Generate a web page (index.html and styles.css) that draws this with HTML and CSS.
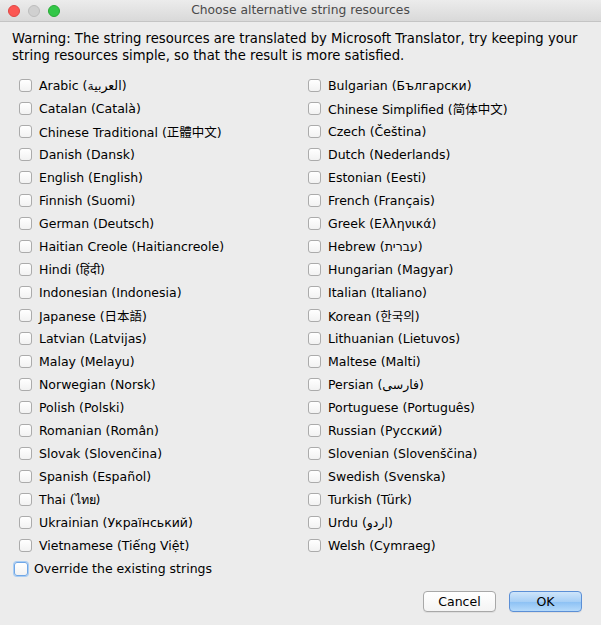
FILE: index.html
```html
<!DOCTYPE html>
<html>
<head>
<meta charset="utf-8">
<link rel="stylesheet" href="styles.css">
</head>
<body>
<div class="window">
  <div class="titlebar">
    <div class="lights">
      <span class="light red"></span>
      <span class="light gray"></span>
      <span class="light green"></span>
    </div>
    <div class="title">Choose alternative string resources</div>
  </div>
  <div class="content">
    <p class="warning">Warning: The string resources are translated by Microsoft Translator, try keeping your<br>string resources simple, so that the result is more satisfied.</p>
    <div class="grid">
      <label class="item"><span class="box"></span>Arabic (العربية)</label>
      <label class="item"><span class="box"></span>Bulgarian (Български)</label>
      <label class="item"><span class="box"></span>Catalan (Català)</label>
      <label class="item"><span class="box"></span>Chinese Simplified (简体中文)</label>
      <label class="item"><span class="box"></span>Chinese Traditional (正體中文)</label>
      <label class="item"><span class="box"></span>Czech (Čeština)</label>
      <label class="item"><span class="box"></span>Danish (Dansk)</label>
      <label class="item"><span class="box"></span>Dutch (Nederlands)</label>
      <label class="item"><span class="box"></span>English (English)</label>
      <label class="item"><span class="box"></span>Estonian (Eesti)</label>
      <label class="item"><span class="box"></span>Finnish (Suomi)</label>
      <label class="item"><span class="box"></span>French (Français)</label>
      <label class="item"><span class="box"></span>German (Deutsch)</label>
      <label class="item"><span class="box"></span>Greek (Ελληνικά)</label>
      <label class="item"><span class="box"></span>Haitian Creole (Haitiancreole)</label>
      <label class="item"><span class="box"></span>Hebrew (עברית)</label>
      <label class="item"><span class="box"></span>Hindi (हिंदी)</label>
      <label class="item"><span class="box"></span>Hungarian (Magyar)</label>
      <label class="item"><span class="box"></span>Indonesian (Indonesia)</label>
      <label class="item"><span class="box"></span>Italian (Italiano)</label>
      <label class="item"><span class="box"></span>Japanese (日本語)</label>
      <label class="item"><span class="box"></span>Korean (한국의)</label>
      <label class="item"><span class="box"></span>Latvian (Latvijas)</label>
      <label class="item"><span class="box"></span>Lithuanian (Lietuvos)</label>
      <label class="item"><span class="box"></span>Malay (Melayu)</label>
      <label class="item"><span class="box"></span>Maltese (Malti)</label>
      <label class="item"><span class="box"></span>Norwegian (Norsk)</label>
      <label class="item"><span class="box"></span>Persian (فارسی)</label>
      <label class="item"><span class="box"></span>Polish (Polski)</label>
      <label class="item"><span class="box"></span>Portuguese (Português)</label>
      <label class="item"><span class="box"></span>Romanian (Român)</label>
      <label class="item"><span class="box"></span>Russian (Русский)</label>
      <label class="item"><span class="box"></span>Slovak (Slovenčina)</label>
      <label class="item"><span class="box"></span>Slovenian (Slovenščina)</label>
      <label class="item"><span class="box"></span>Spanish (Español)</label>
      <label class="item"><span class="box"></span>Swedish (Svenska)</label>
      <label class="item"><span class="box"></span>Thai (ไทย)</label>
      <label class="item"><span class="box"></span>Turkish (Türk)</label>
      <label class="item"><span class="box"></span>Ukrainian (Український)</label>
      <label class="item"><span class="box"></span>Urdu (اردو)</label>
      <label class="item"><span class="box"></span>Vietnamese (Tiếng Việt)</label>
      <label class="item"><span class="box"></span>Welsh (Cymraeg)</label>
    </div>
    <label class="override"><span class="box focus"></span>Override the existing strings</label>
    <div class="buttons">
      <button class="btn">Cancel</button>
      <button class="btn primary">OK</button>
    </div>
  </div>
</div>
</body>
</html>
```

FILE: styles.css
```css
html, body {
  margin: 0;
  padding: 0;
  background: #ececec;
}
.window {
  width: 601px;
  height: 625px;
  background: #ececec;
  font-family: "DejaVu Sans", "Noto Sans CJK SC", sans-serif;
  font-size: 12px;
  color: #000;
  overflow: hidden;
}
.titlebar {
  position: relative;
  height: 21px;
  background: linear-gradient(#ececec, #d9d9d9);
  border-bottom: 1px solid #c4c4c4;
  border-radius: 4px 4px 0 0;
  display: flex;
  align-items: center;
  justify-content: center;
}
.lights {
  position: absolute;
  left: 8px;
  top: 5px;
  display: flex;
  gap: 8px;
}
.light {
  width: 12px;
  height: 12px;
  border-radius: 50%;
  box-sizing: border-box;
}
.red { background: #fc5753; border: 1px solid #df4744; }
.gray { background: #d0d0d0; border: 1px solid #bdbdbd; }
.green { background: #33c748; border: 1px solid #27aa35; }
.title {
  color: #4a4a4a;
  font-size: 12.3px;
  line-height: 21px;
}
.content {
  padding: 8px 0 0 0;
}
.warning {
  margin: 0 0 0 12px;
  line-height: 17px;
  white-space: nowrap;
  font-size: 13.2px;
}
.grid {
  margin-top: 10px;
  display: grid;
  grid-template-columns: 289px 1fr;
  grid-auto-rows: 23px;
  padding-left: 19px;
}
.item, .override {
  display: flex;
  align-items: center;
  white-space: nowrap;
  font-size: 12.5px;
}
.box {
  width: 13px;
  height: 13px;
  box-sizing: border-box;
  border: 1px solid #ababab;
  border-radius: 3px;
  background: linear-gradient(#ffffff, #f2f2f2);
  margin-right: 7px;
  flex: none;
}
.override {
  height: 23px;
  padding-left: 14px;
}
.box.focus {
  width: 14px;
  height: 14px;
  border: 1px solid #6fa6e6;
  box-shadow: 0 0 0 1px #a9cdf3;
  margin-right: 6px;
}
.buttons {
  display: flex;
  justify-content: flex-end;
  gap: 13px;
  padding-right: 19px;
  margin-top: 11px;
}
.btn {
  width: 73px;
  height: 21px;
  box-sizing: border-box;
  border-radius: 4px;
  font-family: "DejaVu Sans", sans-serif;
  font-size: 12.5px;
  color: #000;
  padding: 0;
  border: 1px solid #a8a8a8;
  background: linear-gradient(#ffffff, #f4f4f4);
  box-shadow: 0 1px 0 rgba(0,0,0,0.06);
}
.btn.primary {
  border: 1px solid #5b8fd6;
  background: linear-gradient(#cfe5fa 0%, #a7cff6 50%, #8bc0f4 51%, #b5dafb 100%);
}
```
